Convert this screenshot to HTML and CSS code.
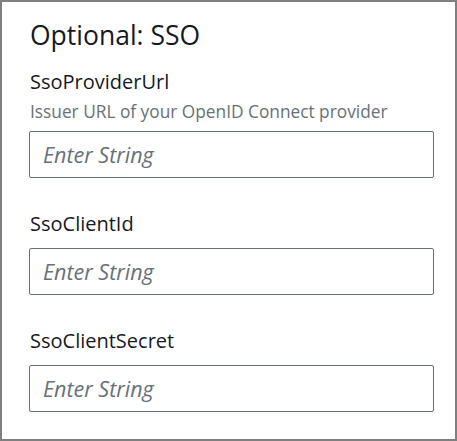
FILE: index.html
```html
<!DOCTYPE html>
<html>
<head>
<meta charset="utf-8">
<link rel="stylesheet" href="styles.css">
</head>
<body>
<div class="panel">
  <h2 class="title">Optional: SSO</h2>
  <div class="field">
    <label class="label">SsoProviderUrl</label>
    <div class="desc">Issuer URL of your OpenID Connect provider</div>
    <div class="input"><span class="placeholder">Enter String</span></div>
  </div>
  <div class="field">
    <label class="label">SsoClientId</label>
    <div class="input"><span class="placeholder">Enter String</span></div>
  </div>
  <div class="field">
    <label class="label">SsoClientSecret</label>
    <div class="input"><span class="placeholder">Enter String</span></div>
  </div>
</div>
</body>
</html>
```
FILE: styles.css
```css
html, body {
  margin: 0;
  padding: 0;
  background: #ffffff;
}
.panel {
  box-sizing: border-box;
  width: 457px;
  height: 441px;
  border: 2px solid #808080;
  padding: 0 21px 0 27px;
  font-family: "Open Sans", "Noto Sans", sans-serif;
  color: #16191f;
  display: flex;
  flex-direction: column;
}
.title {
  margin: 16.6px 0 0 1px;
  font-size: 26.5px;
  font-weight: 400;
  line-height: 32px;
}
.field {
  display: flex;
  flex-direction: column;
  margin-top: 18.9px;
}
.field + .field {
  margin-top: 33.5px;
}
.label {
  font-size: 20px;
  line-height: 26px;
  margin-left: 1px;
}
.desc {
  font-size: 17.3px;
  line-height: 22px;
  margin-top: 5.1px;
  color: #687078;
  margin-left: 1px;
}
.input {
  box-sizing: border-box;
  height: 47px;
  margin-top: 10.5px;
  border: 1px solid #687078;
  border-radius: 2px;
  padding: 0 13px;
  display: flex;
  align-items: center;
}
.desc + .input {
  margin-top: 8.4px;
}
.placeholder {
  font-style: italic;
  font-size: 21.5px;
  color: #687078;
}
```
